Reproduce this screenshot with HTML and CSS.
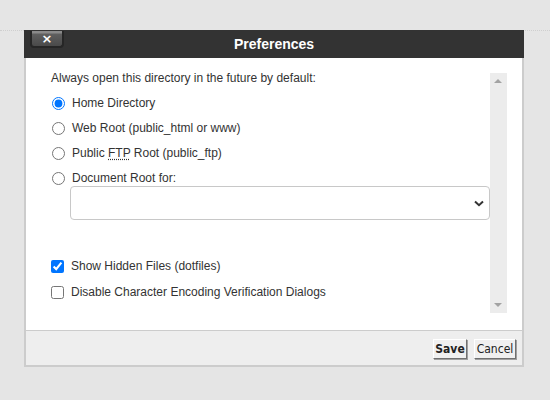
FILE: index.html
```html
<!DOCTYPE html>
<html>
<head>
<meta charset="utf-8">
<link rel="stylesheet" href="styles.css">
</head>
<body>
<div class="page-line"></div>
<div class="dialog">
  <div class="titlebar">
    <button class="close">×</button>
    <span class="title">Preferences</span>
  </div>
  <div class="body">
    <div class="content">
      <p class="lead">Always open this directory in the future by default:</p>
      <label class="row top"><input type="radio" name="dir" checked><span>Home Directory</span></label>
      <label class="row"><input type="radio" name="dir"><span>Web Root (public_html or www)</span></label>
      <label class="row"><input type="radio" name="dir"><span>Public <abbr title="File Transfer Protocol">FTP</abbr> Root (public_ftp)</span></label>
      <label class="row"><input type="radio" name="dir"><span>Document Root for:</span></label>
      <div class="select-wrap">
        <select class="select"><option></option></select>
        <svg class="chev" width="10" height="7" viewBox="0 0 10 7"><path d="M1 1.5 L5 5.2 L9 1.5" fill="none" stroke="#333" stroke-width="2"/></svg>
      </div>
      <label class="row check first"><input type="checkbox" checked><span>Show Hidden Files (dotfiles)</span></label>
      <label class="row check"><input type="checkbox"><span>Disable Character Encoding Verification Dialogs</span></label>
    </div>
    <div class="scrollbar">
      <span class="arrow up"></span>
      <span class="arrow down"></span>
    </div>
  </div>
  <div class="footer">
    <button class="btn save">Save</button>
    <button class="btn cancel">Cancel</button>
  </div>
</div>
</body>
</html>
```

FILE: styles.css
```css
html, body {
  margin: 0;
  padding: 0;
  background: #e5e5e5;
  width: 550px;
  height: 400px;
  overflow: hidden;
  font-family: "Liberation Sans", Arial, sans-serif;
}
.page-line {
  margin-top: 30px;
  border-top: 1px dotted #cfcfcf;
}
.dialog {
  position: absolute;
  left: 24px;
  top: 30px;
  width: 500px;
}
.titlebar {
  position: relative;
  height: 28px;
  background: #333;
  color: #fff;
  display: flex;
  align-items: center;
  justify-content: center;
}
.title {
  font-family: "Liberation Sans", Arial, sans-serif;
  font-weight: bold;
  font-size: 14px;
}
.close {
  position: absolute;
  left: 6px;
  top: 1px;
  width: 34px;
  height: 17px;
  padding: 0;
  border: 2px solid #262626;
  border-top: 0;
  border-radius: 0 0 4px 4px;
  background: linear-gradient(#8a8a8a 0, #8a8a8a 2px, #5f5f5f 3px, #4a4a4a 100%);
  color: #fff;
  font-family: "DejaVu Sans", sans-serif;
  font-weight: bold;
  font-size: 13px;
  line-height: 13px;
}
.body {
  background: #fff;
  border-left: 2px solid #cccccc;
  border-right: 2px solid #cccccc;
  height: 272px;
  box-sizing: border-box;
  display: flex;
  padding: 15px 15px 17px 0;
}
.content {
  flex: 1;
  padding-left: 25px;
  color: #333;
  font-size: 12px;
}
.lead {
  margin: -2px 0 0;
  line-height: 14px;
}
.row {
  display: flex;
  align-items: center;
  height: 16px;
  margin-top: 9px;
}
.row.top {
  margin-top: 10px;
}
.row input {
  margin: 0 7px 0 1px;
  width: 13px;
  height: 13px;
}
abbr {
  text-decoration: underline dotted;
  text-underline-offset: 2px;
}
.select-wrap {
  position: relative;
  margin: 0 0 0 19px;
  height: 34px;
}
.select {
  appearance: none;
  -webkit-appearance: none;
  width: 100%;
  height: 34px;
  border: 1px solid #c8c8c8;
  border-radius: 4px;
  background: #fff;
  display: block;
}
.chev {
  position: absolute;
  right: 6px;
  top: 14px;
}
.check.first {
  margin-top: 38px;
}
.check {
  margin-top: 10px;
}
.check input {
  margin: 0 7px 0 0;
}
.scrollbar {
  width: 17px;
  background: #ececec;
  position: relative;
}
.arrow {
  position: absolute;
  left: 4px;
  width: 0;
  height: 0;
  border-left: 4px solid transparent;
  border-right: 4px solid transparent;
}
.arrow.up {
  top: 6px;
  border-bottom: 4px solid #a3a3a3;
}
.arrow.down {
  bottom: 6px;
  border-top: 4px solid #a3a3a3;
}
.footer {
  height: 34px;
  background: #eeeeee;
  border: 2px solid #cccccc;
  border-top: 1px solid #cccccc;
  display: flex;
  justify-content: flex-end;
  align-items: center;
  gap: 7px;
  padding-right: 6px;
  box-sizing: content-box;
}
.btn {
  height: 20px;
  padding: 0;
  background: #f0f0f0;
  border: 1px solid;
  border-color: #fff #707070 #707070 #fff;
  box-shadow: 1px 1px 0 #a0a0a0;
  font-family: "DejaVu Sans Condensed", "DejaVu Sans", Tahoma, sans-serif;
  font-size: 12px;
  color: #222;
  margin-top: 1px;
}
.btn.save {
  font-weight: bold;
  width: 34px;
}
.btn.cancel {
  width: 42px;
}
```
